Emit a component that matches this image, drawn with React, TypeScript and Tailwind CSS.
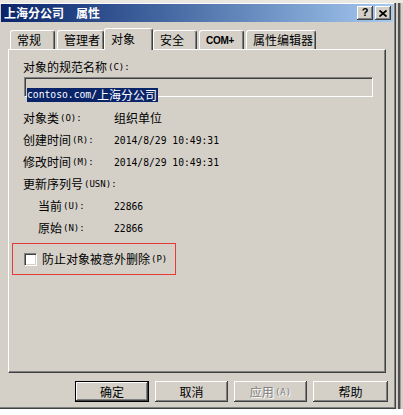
import React from "react";

const CJK = "font-['Noto_Sans_CJK_SC','Noto_Sans',sans-serif]";
const MONO = "font-['DejaVu_Sans_Mono','Liberation_Mono',monospace]";

function Lbl({ t, k, noColon }: { t: string; k: string; noColon?: boolean }) {
  return (
    <span className="flex items-center whitespace-nowrap">
      <span className={`${CJK} text-[12px] leading-[14px]`}>{t}</span>
      <span className={`${MONO} text-[9px] leading-[14px] ml-[1px]`}>
        ({k}){noColon ? "" : ":"}
      </span>
    </span>
  );
}

function Row({ t, k, v, indent }: { t: string; k: string; v: React.ReactNode; indent?: boolean }) {
  return (
    <div className="flex items-center h-[22px]">
      <div className={indent ? "w-[76px] ml-[15px]" : "w-[91px]"}>
        <Lbl t={t} k={k} />
      </div>
      <div className="text-[12px] leading-[14px]">{v}</div>
    </div>
  );
}

const bevel =
  "shadow-[inset_-1px_-1px_#404040,inset_1px_1px_#ffffff,inset_-2px_-2px_#808080,inset_2px_2px_#d4d0c8]";

function Btn({
  children,
  ml,
  w,
  def,
  disabled,
}: {
  children: React.ReactNode;
  ml: string;
  w: string;
  def?: boolean;
  disabled?: boolean;
}) {
  return (
    <div
      className={`${ml} ${w} h-[21px] bg-[#d4d0c8] flex items-center justify-center ${
        def ? "border border-black" : ""
      } ${bevel} ${CJK} text-[12px] leading-[14px] ${
        disabled ? "text-[#808080] [text-shadow:1px_1px_0_#ffffff]" : "text-black"
      }`}
    >
      {children}
    </div>
  );
}

function Tab({
  label,
  ml,
  w,
  selected,
  mono,
}: {
  label: string;
  ml: string;
  w: string;
  selected?: boolean;
  mono?: boolean;
}) {
  return (
    <div
      className={`${ml} ${w} ${
        selected ? "h-[22px] -mb-px relative z-10 pt-[3px]" : "h-[19px] pt-[2px]"
      } bg-[#d4d0c8] border-l border-t border-white border-r border-r-[#404040] rounded-t-[3px] shadow-[inset_-1px_0_#808080] pl-[6px] flex items-start`}
    >
      <span
        className={
          mono
            ? "font-['Liberation_Sans',sans-serif] text-[10px] leading-[14px] tracking-[-0.3px] font-bold mt-[1px]"
            : `${CJK} text-[12px] leading-[14px]`
        }
      >
        {label}
      </span>
    </div>
  );
}

export default function App() {
  return (
    <div className="w-[403px] h-[415px] bg-white overflow-hidden text-black">
      <div className="h-[3px] bg-[#e9e7e0]" />
      <div className="flex">
        {/* dialog */}
        <div className="w-[396px] h-[406px] bg-[#d4d0c8] pt-[1px] pl-[1px] pr-[3px] pb-[3px] shadow-[inset_-1px_-1px_#404040,inset_-2px_-2px_#808080,inset_0_1px_#ffffff]">
          {/* title bar */}
          <div className="h-[18px] bg-linear-to-r from-[#0a246a] to-[#a6caf0] flex items-center pl-[3px] pr-[2px]">
            <span className={`${CJK} font-bold text-white text-[12px] leading-[14px]`}>上海分公司</span>
            <span className={`${CJK} font-bold text-white text-[12px] leading-[14px] ml-[12px]`}>属性</span>
            <div className="flex-1" />
            <div className={`w-[16px] h-[14px] bg-[#d4d0c8] ${bevel} flex items-center justify-center`}>
              <span className="font-['Liberation_Sans',sans-serif] font-bold text-[11px] leading-[11px] -mt-px">?</span>
            </div>
            <div className={`w-[16px] h-[14px] ml-[2px] bg-[#d4d0c8] ${bevel} flex items-center justify-center`}>
              <svg width="8" height="7" viewBox="0 0 8 7">
                <path d="M0.5 0.5 L7.5 6.5 M7.5 0.5 L0.5 6.5" stroke="#000" strokeWidth="1.8" />
              </svg>
            </div>
          </div>

          {/* tabs */}
          <div className="h-[21px] mt-[6px] flex items-end">
            <Tab label="常规" ml="ml-[9px]" w="w-[45px]" />
            <Tab label="管理者" ml="ml-[2px]" w="w-[47px]" />
            <Tab label="对象" ml="ml-0" w="w-[49px]" selected />
            <Tab label="安全" ml="ml-0" w="w-[44px]" />
            <Tab label="COM+" ml="ml-[2px]" w="w-[45px]" mono />
            <Tab label="属性编辑器" ml="ml-[2px]" w="w-[70px]" />
          </div>

          {/* panel */}
          <div className="ml-[7px] w-[378px] h-[324px] border-l border-t border-white border-r border-b border-r-[#404040] border-b-[#404040] shadow-[inset_-1px_-1px_#808080] pt-[10px] pl-[14px]">
            <Lbl t="对象的规范名称" k="C" />
            <div className="mt-[3px] ml-[1px] w-[349px] h-[20px] border-l border-t border-[#808080] border-r border-b border-r-white border-b-white shadow-[inset_1px_1px_#404040,inset_-1px_-1px_#d4d0c8] pl-[2px] pt-[2px]">
              <span className="inline-flex items-center bg-[#0a246a] text-white h-[14px] pr-[1px]">
                <span className={`${MONO} text-[9.7px] leading-[14px]`}>contoso.com/</span>
                <span className={`${CJK} text-[12px] leading-[14px]`}>上海分公司</span>
              </span>
            </div>

            <div className="mt-[10px]">
              <Row t="对象类" k="O" v={<span className={CJK}>组织单位</span>} />
              <Row t="创建时间" k="R" v={<span className={`${MONO} text-[9.7px]`}>2014/8/29 10:49:31</span>} />
              <Row t="修改时间" k="M" v={<span className={`${MONO} text-[9.7px]`}>2014/8/29 10:49:31</span>} />
              <div className="flex items-center h-[22px]">
                <Lbl t="更新序列号" k="USN" />
              </div>
              <Row t="当前" k="U" indent v={<span className={`${MONO} text-[9.7px]`}>22866</span>} />
              <Row t="原始" k="N" indent v={<span className={`${MONO} text-[9.7px]`}>22866</span>} />
            </div>

            <div className="-ml-[11px] mt-[4px] w-[164px] h-[32px] border border-[#e53a35] flex items-center pl-[11px]">
              <div className="w-[13px] h-[13px] bg-white border-l border-t border-[#808080] border-r border-b border-r-white border-b-white shadow-[inset_1px_1px_#404040,inset_-1px_-1px_#d4d0c8]" />
              <span className="ml-[5px]">
                <Lbl t="防止对象被意外删除" k="P" noColon />
              </span>
            </div>
          </div>

          {/* buttons */}
          <div className="flex mt-[8px]">
            <Btn ml="ml-[74px]" w="w-[74px]" def>确定</Btn>
            <Btn ml="ml-[6px]" w="w-[73px]">取消</Btn>
            <Btn ml="ml-[6px]" w="w-[73px]" disabled>
              应用<span className={`${MONO} text-[9px] ml-[1px]`}>(A)</span>
            </Btn>
            <Btn ml="ml-[6px]" w="w-[75px]">帮助</Btn>
          </div>
        </div>

        {/* right strip */}
        <div className="w-[7px] h-[406px] bg-[#d4d0c8] flex">
          <div className="w-[2px]" />
          <div className="w-[2px] bg-[#505050]" />
          <div className="w-[1px] bg-[#9a9a9a]" />
        </div>
      </div>
    </div>
  );
}
